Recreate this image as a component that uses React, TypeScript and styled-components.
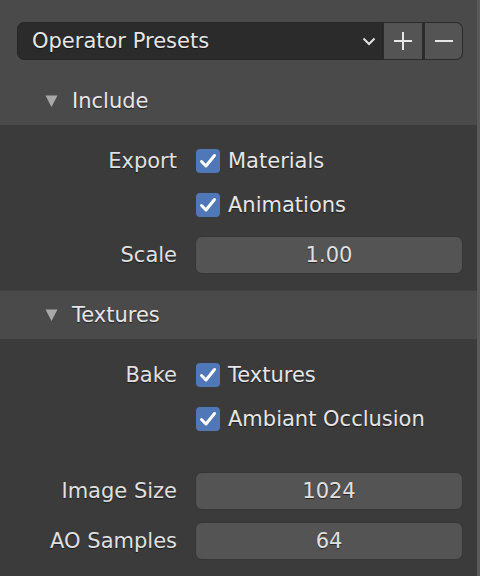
import React from 'react';
import styled, { createGlobalStyle } from 'styled-components';

const GlobalStyle = createGlobalStyle`
  html, body {
    margin: 0;
    padding: 0;
    background: #4a4a4a;
  }
  body {
    font-family: "DejaVu Sans", "Liberation Sans", sans-serif;
  }
`;

const Window = styled.div`
  width: 480px;
  height: 576px;
  box-sizing: border-box;
  border-right: 3px solid #5a5a5a;
  background: #4a4a4a;
  overflow: hidden;
  display: flex;
  flex-direction: column;
  color: #e6e6e6;
  font-size: 21px;
  text-shadow: 0 1px 1px rgba(0, 0, 0, 0.55);
`;

const PresetsRow = styled.div`
  display: flex;
  height: 38px;
  margin: 22px 14px 0 17px;
`;

const PresetsSelect = styled.div`
  flex: 1;
  display: flex;
  align-items: center;
  justify-content: space-between;
  box-sizing: border-box;
  padding: 0 6px 0 14px;
  background: #2b2b2b;
  border: 1px solid #262626;
  border-radius: 7px 0 0 7px;
`;

const IconButton = styled.div<{ $last?: boolean }>`
  width: 40px;
  display: flex;
  align-items: center;
  justify-content: center;
  box-sizing: border-box;
  background: #545454;
  border: 1px solid #2b2b2b;
  border-left: ${p => (p.$last ? '2px solid #2b2b2b' : '1px solid #2b2b2b')};
  border-radius: ${p => (p.$last ? '0 7px 7px 0' : '0')};
`;

const Header = styled.div<{ $divider?: boolean }>`
  display: flex;
  align-items: center;
  gap: 14px;
  height: 48px;
  padding-left: 45px;
  margin-top: ${p => (p.$divider ? '0' : '17px')};
  border-top: ${p => (p.$divider ? '1px solid #3f3f3f' : 'none')};
  background: #4a4a4a;
`;

const Body = styled.div<{ $grow?: boolean }>`
  background: #3b3b3b;
  padding: 14px 14px 16px 0;
  flex: ${p => (p.$grow ? '1' : 'none')};
`;

const Row = styled.div<{ $field?: boolean; $space?: number }>`
  display: grid;
  grid-template-columns: 177px 1fr;
  column-gap: 18px;
  align-items: center;
  height: ${p => (p.$field ? '38px' : '44px')};
  margin-top: ${p => p.$space ?? 0}px;
`;

const Label = styled.span`
  text-align: right;
  color: #e0e0e0;
`;

const CheckWrap = styled.label`
  display: flex;
  align-items: center;
  gap: 8px;
  padding-left: 1px;
`;

const CheckBox = styled.span`
  width: 24px;
  height: 24px;
  border-radius: 4px;
  background: #5077b8;
  display: flex;
  align-items: center;
  justify-content: center;
`;

const Field = styled.div`
  height: 38px;
  box-sizing: border-box;
  border: 1px solid #363636;
  background: #545454;
  border-radius: 7px;
  display: flex;
  align-items: center;
  justify-content: center;
  color: #e0e0e0;
`;

function Triangle() {
  return (
    <svg width="13" height="12" viewBox="0 0 13 12">
      <path d="M0.5 0.5 L12.5 0.5 L6.5 12 Z" fill="#a9a9a9" />
    </svg>
  );
}

function Check() {
  return (
    <svg width="20" height="20" viewBox="0 0 20 20">
      <path d="M3.5 10.5 L8 15 L16.5 4.5" fill="none" stroke="#fff" strokeWidth="3" strokeLinecap="round" strokeLinejoin="round" />
    </svg>
  );
}

function CheckItem({ label }: { label: string }) {
  return (
    <CheckWrap>
      <CheckBox>
        <Check />
      </CheckBox>
      {label}
    </CheckWrap>
  );
}

export default function App() {
  return (
    <>
      <GlobalStyle />
      <Window>
        <PresetsRow>
          <PresetsSelect>
            Operator Presets
            <svg width="14" height="10" viewBox="0 0 14 10">
              <path d="M1.5 2.5 L7 8 L12.5 2.5" fill="none" stroke="#e0e0e0" strokeWidth="2" />
            </svg>
          </PresetsSelect>
          <IconButton>
            <svg width="20" height="20" viewBox="0 0 20 20">
              <path d="M10 1 V19 M1 10 H19" stroke="#e6e6e6" strokeWidth="2" />
            </svg>
          </IconButton>
          <IconButton $last>
            <svg width="20" height="20" viewBox="0 0 20 20">
              <path d="M1 10 H19" stroke="#e6e6e6" strokeWidth="2" />
            </svg>
          </IconButton>
        </PresetsRow>

        <Header>
          <Triangle />
          Include
        </Header>
        <Body>
          <Row>
            <Label>Export</Label>
            <CheckItem label="Materials" />
          </Row>
          <Row>
            <span />
            <CheckItem label="Animations" />
          </Row>
          <Row $field $space={9}>
            <Label>Scale</Label>
            <Field>1.00</Field>
          </Row>
        </Body>

        <Header $divider>
          <Triangle />
          Textures
        </Header>
        <Body $grow>
          <Row>
            <Label>Bake</Label>
            <CheckItem label="Textures" />
          </Row>
          <Row>
            <span />
            <CheckItem label="Ambiant Occlusion" />
          </Row>
          <Row $field $space={31}>
            <Label>Image Size</Label>
            <Field>1024</Field>
          </Row>
          <Row $field $space={12}>
            <Label>AO Samples</Label>
            <Field>64</Field>
          </Row>
        </Body>
      </Window>
    </>
  );
}
